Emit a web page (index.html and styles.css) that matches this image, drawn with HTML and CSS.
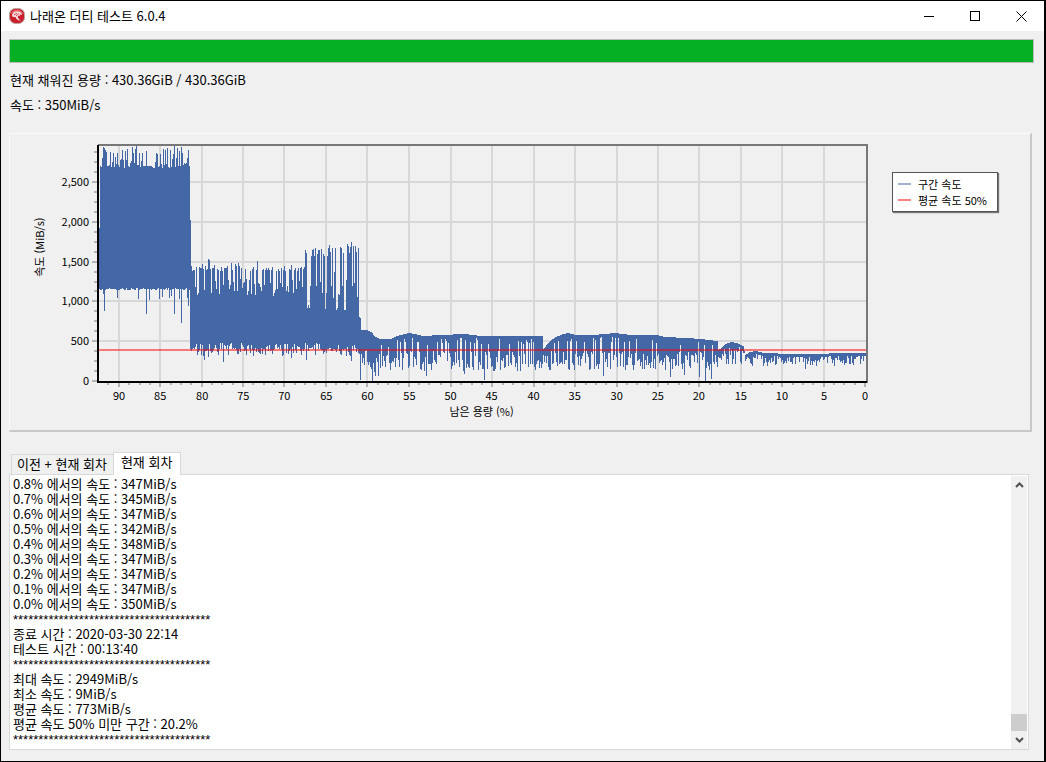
FILE: index.html
```
<!DOCTYPE html>
<html lang="ko">
<head>
  <meta charset="UTF-8" />
  <meta name="viewport" content="width=device-width, initial-scale=1.0"/>
  <title>나래온 더티 테스트 6.0.4</title>
  <link rel="stylesheet" href="styles.css">
</head>
<body>

  <header class="titlebar">
    <svg class="app-icon" viewBox="0 0 16 16" aria-hidden="true">
      <rect x="0.5" y="0.5" width="15" height="15" rx="6" fill="#c9202c" stroke="#b9a3a3"/>
      <path d="M2 6 Q3 2 8 1.500 Q13 2 14 6 Q8 3 2 6Z" fill="#e8656b"/>
      <path d="M3 8 C3 4.500 6 3 8.500 3.500 C11 3.500 13 5 13 7 C11.500 6 10.500 6.500 11 8 C9.500 7.500 8.500 8 9 9.500 C9.500 11 11 12 12 12.500 C9.500 13 7 11.500 6.500 9 C5.500 9 4 9.500 3 8Z" fill="#f6dcdc"/>
      <path d="M5 7 L8 5 M7 8 L10 5.500" stroke="#c9202c" stroke-width="0.8" fill="none"/>
    </svg>
    <h1>나래온 더티 테스트 6.0.4</h1>
    <div class="window-buttons">
      <button type="button" aria-label="최소화">
        <svg viewBox="0 0 11 11"><path d="M0 5.500H10"/></svg>
      </button>
      <button type="button" aria-label="최대화">
        <svg viewBox="0 0 11 11"><path d="M0.500 0.500H9.500V9.500H0.500Z"/></svg>
      </button>
      <button type="button" aria-label="닫기">
        <svg viewBox="0 0 11 11"><path class="smooth" d="M0.500 0.500L10.500 10.500M10.500 0.500L0.500 10.500"/></svg>
      </button>
    </div>
  </header>

  <main>
    <div class="progress" role="progressbar" aria-label="진행률" aria-valuenow="100" aria-valuemin="0" aria-valuemax="100">
      <div class="progress-fill"></div>
    </div>

    <p class="status">현재 채워진 용량 : 430.36GiB / 430.36GiB</p>
    <p class="status">속도 : 350MiB/s</p>

    <section class="chart-panel">
      <svg class="chart" id="chart" viewBox="10 134 857 296" role="img" aria-label="남은 용량별 속도"></svg>
      <ul class="legend">
        <li><span class="swatch blue"></span>구간 속도</li>
        <li><span class="swatch red"></span>평균 속도 50%</li>
      </ul>
    </section>

    <div class="tabs" role="tablist">
      <button type="button" class="tab" role="tab" aria-selected="false">이전 + 현재 회차</button>
      <button type="button" class="tab active" role="tab" aria-selected="true">현재 회차</button>
    </div>

    <section class="log-box">
      <div class="log" role="log">
        <p>0.8% 에서의 속도 : 347MiB/s</p>
        <p>0.7% 에서의 속도 : 345MiB/s</p>
        <p>0.6% 에서의 속도 : 347MiB/s</p>
        <p>0.5% 에서의 속도 : 342MiB/s</p>
        <p>0.4% 에서의 속도 : 348MiB/s</p>
        <p>0.3% 에서의 속도 : 347MiB/s</p>
        <p>0.2% 에서의 속도 : 347MiB/s</p>
        <p>0.1% 에서의 속도 : 347MiB/s</p>
        <p>0.0% 에서의 속도 : 350MiB/s</p>
        <p class="stars">***************************************</p>
        <p>종료 시간 : 2020-03-30 22:14</p>
        <p>테스트 시간 : 00:13:40</p>
        <p class="stars">***************************************</p>
        <p>최대 속도 : 2949MiB/s</p>
        <p>최소 속도 : 9MiB/s</p>
        <p>평균 속도 : 773MiB/s</p>
        <p>평균 속도 50% 미만 구간 : 20.2%</p>
        <p class="stars">***************************************</p>
      </div>
      <div class="scrollbar">
        <button type="button" aria-label="위로">
          <svg viewBox="0 0 9 6"><path d="M1 5L4.500 1.500L8 5"/></svg>
        </button>
        <div class="thumb"></div>
        <button type="button" aria-label="아래로">
          <svg viewBox="0 0 9 6"><path d="M1 1L4.500 4.500L8 1"/></svg>
        </button>
      </div>
    </section>
  </main>

  <script src="chart.js"></script>
</body>
</html>
```

FILE: styles.css
```
* {
  box-sizing: border-box;
}

body {
  margin: 0;
  min-height: 100vh;
  display: flex;
  flex-direction: column;
  border: 1px solid #000;
  border-right-width: 2px;
  background-color: #f0f0f0;
  color: #000;
  font-family: "Noto Sans CJK KR", sans-serif;
  font-size: 13px;
  line-height: 15px;
}

p, h1, ul {
  margin: 0;
  padding: 0;
}

button {
  border: none;
  padding: 0;
  background: none;
  color: inherit;
  font: inherit;
}

/* Title bar */
.titlebar {
  display: flex;
  align-items: center;
  height: 30px;
  padding-left: 8px;
  background: #fff;
}

.app-icon {
  width: 16px;
  height: 16px;
}

.titlebar h1 {
  flex: 1;
  padding: 0 0 2px 5px;
  font-size: 13px;
  font-weight: normal;
}

.window-buttons {
  display: flex;
}

.window-buttons button {
  width: 46px;
  height: 30px;
  display: flex;
  align-items: center;
  justify-content: center;
}

.window-buttons svg {
  width: 11px;
  height: 11px;
  fill: none;
  stroke: #000;
  shape-rendering: crispEdges;
}

.window-buttons .smooth {
  shape-rendering: auto;
}

main {
  flex: 1;
  display: flex;
  flex-direction: column;
  padding: 8px 12px 11px 8px;
}

/* Progress */
.progress {
  height: 24px;
  margin-right: -2px;
  margin-bottom: 9px;
  border: 1px solid #bcbcbc;
}

.progress-fill {
  height: 100%;
  background: #06b025;
}

.status {
  padding-left: 1px;
  margin-bottom: 10px;
}

/* Chart */
.chart-panel {
  display: flex;
  align-items: flex-start;
  margin-top: 11px;
  padding-right: 32px;
  border: 1px solid #fafafa;
  border-right: 2px solid #c8c8c8;
  border-bottom: 2px solid #c8c8c8;
}

.chart {
  flex: 1;
  min-width: 0;
  display: block;
}

.chart text {
  font-size: 11px;
}

.legend {
  width: 106px;
  margin: 38px 0 0 24px;
  padding: 3px 5px;
  border: 1px solid #555;
  background: #fff;
  box-shadow: 1px 1px 1px #777;
  list-style: none;
  font-size: 11px;
  line-height: 16px;
  white-space: nowrap;
}

.legend li {
  display: flex;
  align-items: center;
}

.swatch {
  width: 13px;
  height: 2px;
  margin-right: 7px;
}

.swatch.blue {
  background: #a1b2d3;
}

.swatch.red {
  background: #ff8080;
}

/* Tabs */
.tabs {
  display: flex;
  align-items: flex-end;
  margin-top: 20px;
  padding-left: 2px;
}

.tab {
  height: 20px;
  padding: 0 6px 2px 5px;
  border: 1px solid #d9d9d9;
  border-bottom: none;
}

.tab.active {
  height: 23px;
  margin: 0 0 -1px -1px;
  padding: 0 8px 5px 7px;
  z-index: 1;
  background: #fff;
}

/* Log */
.log-box {
  flex: 1;
  display: flex;
  margin-right: 3px;
  padding: 1px 1px 0 3px;
  border: 1px solid #d9d9d9;
  background: #fff;
}

.log {
  flex: 1;
}

.log p {
  height: 15px;
  white-space: nowrap;
}

.log .stars {
  font-family: "Liberation Sans", sans-serif;
  line-height: 17px;
}

.scrollbar {
  width: 16px;
  display: flex;
  flex-direction: column;
  background: #f0f0f0;
}

.scrollbar button {
  height: 18px;
  display: flex;
  align-items: center;
  justify-content: center;
}

.scrollbar svg {
  width: 9px;
  height: 6px;
  fill: none;
  stroke: #505050;
  stroke-width: 2;
}

.thumb {
  height: 17px;
  margin-top: auto;
  background: #cdcdcd;
}
```

FILE: chart.js
```
const svg = document.getElementById('chart');

const LEFT = 98;
const RIGHT = 866;
const TOP = 145;
const BASE = 381;

let out = '';

function line(x1, y1, x2, y2, color, width) {
  out += `<path d="M${x1} ${y1}L${x2} ${y2}" stroke="${color}" stroke-width="${width}"/>`;
}

// Fixed seed so that the graph is the same on every load
let seed = 20200330;
function rand() {
  seed = (seed * 1103515245 + 12345) % 2147483648;
  return seed / 2147483648;
}
function between(a, b) {
  return Math.round(a + rand() * (b - a));
}

const xOf = percent => Math.round(864 - percent * 8.28);
const yOf = speed => Math.round(BASE - speed * 0.0796);

// Peaks and drops that stand out: x -> y
const peaks = {
  99: 228, 100: 166, 101: 167, 102: 158, 103: 147, 104: 148, 105: 150, 106: 152, 110: 152, 112: 162, 113: 153,
  115: 157, 117: 153, 120: 160, 121: 159, 122: 150, 123: 160, 125: 151, 126: 160, 127: 149, 131: 161,
  132: 147, 133: 153, 135: 149, 136: 146, 139: 153, 141: 161, 142: 153, 146: 151, 155: 162, 156: 153,
  157: 154, 160: 154, 163: 149, 165: 150, 167: 148, 170: 150, 172: 159, 173: 154, 174: 146, 176: 158,
  177: 148, 179: 151, 181: 147, 182: 153, 187: 158, 188: 150, 189: 166, 190: 220,
  191: 266, 192: 271, 193: 270, 194: 270, 195: 287, 196: 267, 197: 295, 198: 293, 199: 267, 200: 268,
  201: 268, 202: 264, 203: 269, 204: 290, 205: 266, 206: 270, 207: 269, 208: 259, 209: 260, 210: 269,
  211: 293, 212: 268, 213: 268, 214: 265, 219: 294, 231: 263, 235: 264, 238: 263, 257: 261, 291: 265,
  305: 250, 306: 253, 307: 308, 308: 305, 309: 308, 310: 286, 311: 256, 312: 250, 313: 249, 314: 256,
  315: 248, 316: 286, 317: 254, 318: 250, 319: 250, 320: 282, 321: 249, 322: 293, 323: 254, 324: 256,
  325: 309, 326: 293, 327: 256, 328: 248, 329: 245, 330: 252, 331: 286, 332: 248, 333: 298, 334: 272,
  335: 248, 336: 310, 337: 308, 338: 294, 339: 295, 340: 247, 341: 248, 342: 286, 343: 253, 344: 310,
  345: 310, 346: 280, 347: 244, 348: 246, 349: 253, 350: 247, 351: 242, 352: 286, 353: 246, 354: 283,
  355: 246, 356: 252, 357: 297, 358: 248, 359: 317, 360: 318
};
const drops = {
  103: 294, 104: 311, 117: 298, 138: 299, 146: 314, 149: 300, 159: 299, 162: 297, 169: 298, 171: 296,
  174: 314, 179: 299, 181: 323, 187: 298, 188: 306, 201: 355, 204: 360, 208: 357, 223: 362, 306: 360,
  253: 356, 265: 355, 291: 358, 351: 361, 360: 380, 361: 354, 362: 363, 363: 358, 364: 365, 365: 351,
  366: 350, 367: 362, 368: 365, 369: 362, 370: 367, 371: 369, 372: 381, 373: 363, 374: 372, 375: 376,
  376: 358, 377: 362, 378: 376, 426: 376, 483: 380, 463: 374, 602: 376, 669: 377, 683: 375, 698: 377,
  704: 381, 710: 379, 804: 369
};

// Upper edge of the graph below 60%
const crest = [
  [361, 330], [366, 330], [371, 332], [375, 337], [380, 339], [390, 339], [394, 337], [400, 335],
  [408, 333], [415, 334], [422, 336], [440, 335], [463, 334], [480, 336], [541, 336], [542, 349],
  [546, 344], [550, 340], [554, 337], [562, 334], [567, 333], [574, 335], [592, 335], [602, 334],
  [614, 333], [630, 335], [655, 335], [664, 337], [685, 338], [700, 339], [716, 341], [717, 350],
  [720, 348], [724, 344], [730, 342], [736, 343], [742, 346], [744, 355], [748, 352], [754, 351],
  [763, 353], [790, 354], [865, 353]
];

function crestAt(x) {
  for (let i = 1; i < crest.length; i++) {
    const [x1, y1] = crest[i - 1];
    const [x2, y2] = crest[i];
    if (x <= x2) return Math.round(y1 + (y2 - y1) * (x - x1) / (x2 - x1));
  }
  return 353;
}

function column(x) {
  let high, low;
  if (x < 190) {
    high = between(163, 168);
    low = between(288, 290);
  } else if (x < 361) {
    high = rand() < 0.6 ? between(266, 271) : between(279, 296);
    low = rand() < 0.55 ? between(343, 350) : between(348, 356);
    if (x === 190) low = 349;
  } else {
    high = crestAt(x);
    if (x > 743) {
      low = rand() < 0.22 ? high + 3 : between(357, 366);
    } else {
      low = rand() < 0.2 ? high + between(3, 9) : between(351, 371);
      if (x > 717) low = Math.min(low, 364);
    }
  }
  return [peaks[x] || high, drops[x] || low];
}

// Grid and ticks
for (let p = 0; p <= 92; p += 1.25) {
  const x = xOf(p);
  if (p % 5 === 0) {
    if (p > 0) line(x, TOP, x, BASE, '#d8d8d8', 2);
    line(x, BASE, x, BASE + 6, '#b4b4b4', 2);
    out += `<text x="${x}" y="400" text-anchor="middle">${p}</text>`;
  } else {
    line(x, BASE, x, BASE + 4, '#b4b4b4', 2);
  }
}
for (let v = 0; v <= 2900; v += 125) {
  const y = yOf(v);
  if (v % 500 === 0) {
    if (v > 0) line(LEFT, y, RIGHT, y, '#d8d8d8', 2);
    line(LEFT - 6, y, LEFT, y, '#b4b4b4', 2);
    out += `<text x="89" y="${y + 4}" text-anchor="end">${v.toLocaleString('en-US')}</text>`;
  } else {
    line(LEFT - 4, y, LEFT, y, '#b4b4b4', 2);
  }
}

// Speed graph
let d = '';
for (let x = 99; x < 865; x++) {
  const [high, low] = column(x);
  d += `M${x + 0.5} ${high}V${low}`;
}
out += `<path d="${d}" stroke="#4467a5" fill="none"/>`;

// Half of the average speed
line(LEFT, 350, RIGHT, 350, 'rgba(255, 0, 0, 0.5)', 2);

// Frame
line(LEFT, TOP, RIGHT + 1, TOP, '#777', 2);
line(RIGHT, TOP, RIGHT, BASE + 2, '#777', 2);
line(LEFT, BASE + 1, RIGHT, BASE + 1, '#000', 2);
line(LEFT, TOP, LEFT, BASE + 2, '#000', 2);

out += '<text x="481" y="416" text-anchor="middle">남은 용량 (%)</text>';
out += '<text transform="translate(44 247) rotate(-90)" text-anchor="middle">속도 (MiB/s)</text>';

svg.innerHTML = `<g shape-rendering="crispEdges">${out}</g>`;
```
